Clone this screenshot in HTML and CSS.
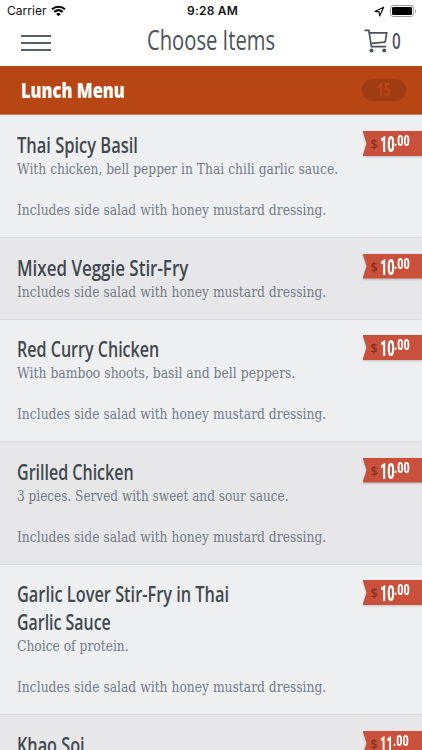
FILE: index.html
```html
<!DOCTYPE html>
<html lang="en">
<head>
<meta charset="utf-8">
<title>Choose Items</title>
<link rel="stylesheet" href="styles.css">
</head>
<body>
<header class="top">
  <div class="status">
    <div class="carrier">Carrier
      <svg width="15" height="12" viewBox="0 0 15 12" fill="none" stroke="#050505" stroke-width="2.1"><path d="M1 4.3C4.8.8 10.2.8 14 4.3M3.3 6.9c2.5-2.2 5.9-2.2 8.4 0"/><path d="M7.5 11.3 5.1 8.9c1.4-1.2 3.4-1.2 4.8 0z" fill="#050505" stroke="none"/></svg>
    </div>
    <div class="clock">9:28 AM</div>
    <div class="power">
      <svg width="11" height="11" viewBox="0 0 11 11" fill="none" stroke="#111" stroke-width="1.2" stroke-linejoin="round"><path d="M9.6 1.2 1.2 5.3l3.9.6.6 3.9z"/></svg>
      <svg width="27" height="12" viewBox="0 0 27 12"><rect x=".5" y=".5" width="23" height="11" rx="2.8" fill="none" stroke="#999"/><rect x="2" y="2" width="20" height="8" rx="1.3"/><path d="M25 4c1.4.6 1.4 3.4 0 4z" fill="#999"/></svg>
    </div>
  </div>
  <nav class="bar">
    <div class="menu"><i></i><i></i><i></i></div>
    <h1><span class="fit" data-w="128">Choose Items</span></h1>
    <div class="cart">
      <svg width="25" height="25" viewBox="0 0 25 25" fill="none" stroke="#4c525b" stroke-width="1.7"><path d="M.5 1.4h4.3l2.6 16.2h14.8M5.5 3.8h17.2l-1.3 8.3-.9 1-12.6 1.2"/><circle cx="7.5" cy="21.6" r="2" fill="#4c525b" stroke="none"/><circle cx="20.2" cy="21.6" r="2" fill="#4c525b" stroke="none"/></svg>
      <span class="fit" data-w="9">0</span>
    </div>
  </nav>
</header>
<section class="heading">
  <h2><span class="fit" data-w="104">Lunch Menu</span></h2>
  <div class="count"><span class="fit" data-w="13">15</span></div>
</section>
<main class="items">
  <article class="item"><div class="copy"><h3><span class="fit" data-w="121">Thai Spicy Basil</span></h3><p><span class="fit" data-w="321.5">With chicken, bell pepper in Thai chili garlic sauce.</span></p><p class="side"><span class="fit" data-w="309">Includes side salad with honey mustard dressing.</span></p></div><div class="price"><div class="flag"><small>$</small><b><span class="fit" data-w="15">10</span></b><sup><span class="fit" data-w="15.5">.00</span></sup></div></div></article>
  <article class="item"><div class="copy"><h3><span class="fit" data-w="171">Mixed Veggie Stir-Fry</span></h3><p><span class="fit" data-w="309">Includes side salad with honey mustard dressing.</span></p></div><div class="price"><div class="flag"><small>$</small><b><span class="fit" data-w="15">10</span></b><sup><span class="fit" data-w="15.5">.00</span></sup></div></div></article>
  <article class="item"><div class="copy"><h3><span class="fit" data-w="142">Red Curry Chicken</span></h3><p><span class="fit" data-w="278">With bamboo shoots, basil and bell peppers.</span></p><p class="side"><span class="fit" data-w="309">Includes side salad with honey mustard dressing.</span></p></div><div class="price"><div class="flag"><small>$</small><b><span class="fit" data-w="15">10</span></b><sup><span class="fit" data-w="15.5">.00</span></sup></div></div></article>
  <article class="item"><div class="copy"><h3><span class="fit" data-w="117">Grilled Chicken</span></h3><p><span class="fit" data-w="272">3 pieces. Served with sweet and sour sauce.</span></p><p class="side"><span class="fit" data-w="309">Includes side salad with honey mustard dressing.</span></p></div><div class="price"><div class="flag"><small>$</small><b><span class="fit" data-w="15">10</span></b><sup><span class="fit" data-w="15.5">.00</span></sup></div></div></article>
  <article class="item"><div class="copy"><h3><span class="fit" data-w="212">Garlic Lover Stir-Fry in Thai</span><br><span class="fit" data-w="94">Garlic Sauce</span></h3><p><span class="fit" data-w="111.5">Choice of protein.</span></p><p class="side"><span class="fit" data-w="309">Includes side salad with honey mustard dressing.</span></p></div><div class="price"><div class="flag"><small>$</small><b><span class="fit" data-w="15">10</span></b><sup><span class="fit" data-w="15.5">.00</span></sup></div></div></article>
  <article class="item"><div class="copy"><h3><span class="fit" data-w="68">Khao Soi</span></h3></div><div class="price"><div class="flag"><small>$</small><b><span class="fit" data-w="13">11</span></b><sup><span class="fit" data-w="15.5">.00</span></sup></div></div></article>
</main>
<script src="fit.js"></script>
</body>
</html>
```
FILE: styles.css
```css
* { box-sizing: border-box; }
body { margin: 0; height: 750px; overflow: hidden; background: #eeeff1; font-family: "Open Sans", "Noto Sans", sans-serif; display: flex; flex-direction: column; }
h1, h2, h3, p { margin: 0; font-weight: 400; }
.fit { display: inline-block; white-space: nowrap; transform-origin: left center; }
.top { height: 65.5px; flex: none; background: #fff; }
.status { height: 22px; display: grid; grid-template-columns: 1fr auto 1fr; align-items: center; padding: 0 5px 0 7px; font: 12px/22px Inter, sans-serif; color: #111; }
.carrier { display: flex; align-items: center; gap: 4.5px; letter-spacing: .02px; }
.clock { font-weight: 600; letter-spacing: .2px; padding-left: 1px; }
.power { display: flex; justify-content: flex-end; align-items: center; gap: 5px; }
.bar { height: 43px; display: grid; grid-template-columns: 126px 1fr 58px; padding-left: 21px; color: #4c525b; }
.menu { width: 30px; padding-top: 12.5px; display: flex; flex-direction: column; gap: 5.3px; }
.menu i { height: 2px; background: #56606b; }
.bar h1 { font-size: 26.5px; line-height: 36px; }
.cart { display: flex; gap: 3px; padding-top: 7px; font-size: 22px; font-weight: 600; line-height: 23px; }
.cart svg { flex: none; }
.heading { height: 49px; flex: none; display: flex; align-items: center; justify-content: space-between; padding: 0 16px 0 21px; background: #b84614; border-top: 1px solid #a7502a; border-bottom: 1px solid #cb8060; color: #fff; }
.heading h2 { font-size: 21.5px; font-weight: 800; line-height: 46px; padding-bottom: 1px; }
.count { width: 44px; height: 22px; border-radius: 11px; background: #a03c12; color: #b84614; font-size: 17px; font-weight: 700; line-height: 22px; padding-left: 15px; }
.items { flex: none; }
.item { display: flex; justify-content: space-between; padding: 15.5px 0 16.5px 17px; border-top: 1px solid #d9dbdd; background: #eeeff1; }
.item:first-child { border-top-color: #eeeff1; }
.item:nth-child(even) { background: #e7e7e9; }
.copy { width: 330px; }
.item h3 { font-size: 21.5px; line-height: 28px; font-weight: 600; color: #41484e; }
.item h3 .fit, .item p .fit { vertical-align: top; }
.item p { height: 20.5px; font: 14px/20.5px "DejaVu Serif", serif; color: #737b87; }
.item p .fit { line-height: 21px; }
.item .side { margin-top: 20.5px; }
.price { width: 59.5px; height: 26px; filter: drop-shadow(0 1px 1px #0003); }
.flag { height: 25px; display: flex; padding-left: 8px; background: #c9503a; clip-path: polygon(0 0, 100% 0, 100% 100%, 0 100%, 4px 50%); color: #fff; }
.flag small { width: 9px; font-size: 12.5px; line-height: 27px; font-weight: 600; color: #86301e; }
.flag b { width: 14.5px; font: 900 22px/27px Roboto, sans-serif; }
.item:last-child .flag b { width: 13px; }
.flag sup { font: 900 14.5px/22px Roboto, sans-serif; vertical-align: baseline; }
```
FILE: fit.js
```js
// Condense each label horizontally to its intended measure.
document.querySelectorAll(".fit").forEach(function (el) {
  el.style.transform = "scaleX(" + Number(el.dataset.w) / el.offsetWidth + ")";
});
```
